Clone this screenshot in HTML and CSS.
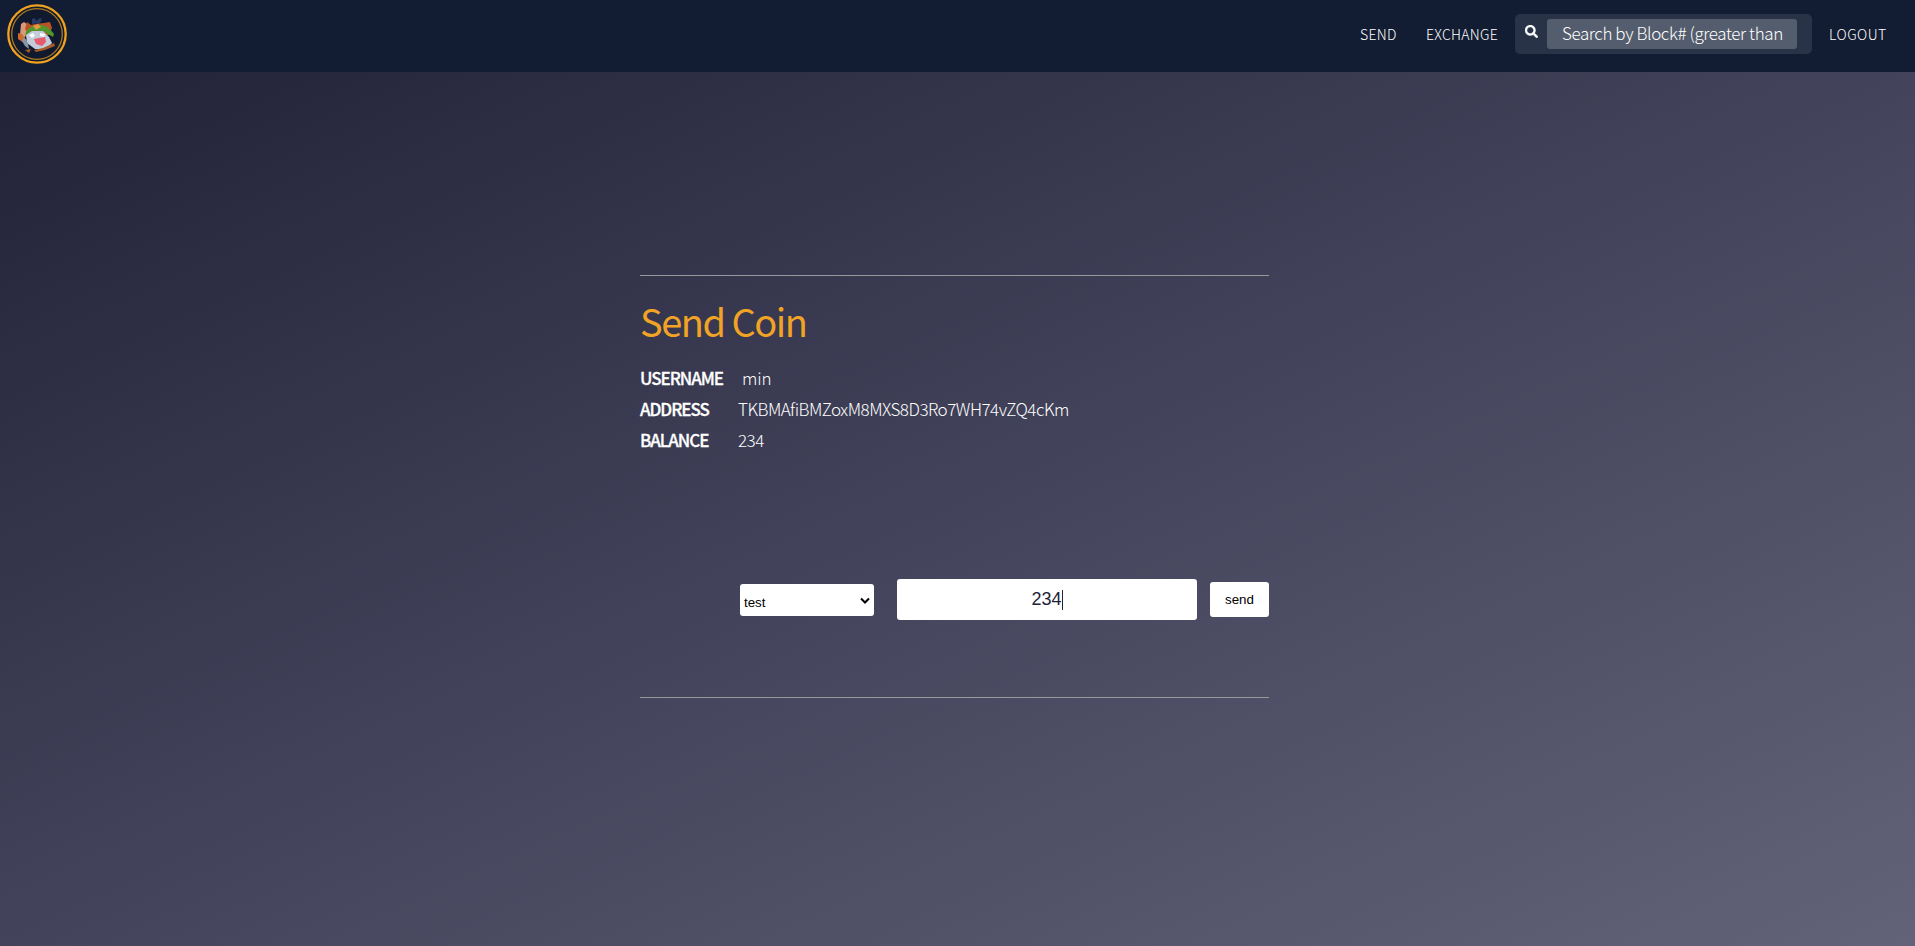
FILE: index.html
```html
<!DOCTYPE html>
<html lang="en">
<head>
<meta charset="utf-8">
<title>Send Coin</title>
<link rel="stylesheet" href="styles.css">
</head>
<body>
<header class="navbar">
  <svg class="logo" viewBox="0 0 60 60" width="60" height="60" aria-label="Logo">
    <circle cx="30" cy="30" r="28.7" fill="#10192d" stroke="#eea21f" stroke-width="2.3"/>
    <circle cx="30" cy="30" r="25.3" fill="none" stroke="#ad7920" stroke-width="1.3"/>
    <path d="M14 20l3-2 3 2 2 4-3 8-4 3-2-4z" fill="#d99a7a"/>
    <path d="M11 29l4 1 5 7-3 2-6-4z" fill="#ce6b28"/>
    <path d="M25 15l3-1 1 3 4-3 2 1-2 4-8 1z" fill="#283b66"/>
    <path d="M20 18l4 3 4-1 9-1 6-1 2 6-3 7-19 1-5-7z" fill="#b95227"/>
    <path d="M19 28q4-7 13-7t15 9l-1 3-10-6-11 2-7 3z" fill="#51952d"/>
    <path d="M26 22l5-2 3 3-5 3z" fill="#e09a3f"/>
    <path d="M19 31l6-4 11 0 6 6 3 6-5 6-12 0-8-6z" fill="#c2ccda"/>
    <path d="M22 31l4-2 2 3-3 2zM33 29l5 1-1 3-4-1z" fill="#fff"/>
    <path d="M27 35l11-2 1 5-4 4-6-2z" fill="#e65a6d"/>
    <path d="M17 33l4 6 1 6-4-3-3-5z" fill="#8598a8"/>
    <path d="M27 46l9-2 11-5 1 3-10 4-9 2zM18 46l6-1-2 4z" fill="#a45b28"/>
  </svg>
  <nav class="menu">
    <a class="nav-link send-link">SEND</a>
    <a class="nav-link exchange-link">EXCHANGE</a>
    <div class="search">
      <svg class="search-icon" viewBox="0 0 512 512" width="13" height="13"><path fill="#fff" stroke="#fff" stroke-width="12" d="M505 442.700 405.300 343c-4.500-4.500-10.600-7-17-7H372c27.600-35.300 44-79.700 44-128C416 93.100 322.900 0 208 0S0 93.100 0 208s93.100 208 208 208c48.300 0 92.700-16.400 128-44v16.300c0 6.400 2.500 12.500 7 17l99.700 99.700c9.400 9.400 24.600 9.400 33.900 0l28.300-28.300c9.400-9.400 9.400-24.600.1-34zM208 336c-70.700 0-128-57.200-128-128 0-70.700 57.200-128 128-128 70.700 0 128 57.200 128 128 0 70.700-57.200 128-128 128z"/></svg>
      <div class="search-field"><span class="search-text">Search by Block# (greater than</span></div>
    </div>
    <a class="nav-link logout-link">LOGOUT</a>
  </nav>
</header>
<main class="page">
  <section class="panel">
    <h1 class="title">Send Coin</h1>
    <div class="row"><span class="label">USERNAME</span><span class="value name">min</span></div>
    <div class="row"><span class="label">ADDRESS</span><span class="value">TKBMAfiBMZoxM8MXS8D3Ro7WH74vZQ4cKm</span></div>
    <div class="row"><span class="label">BALANCE</span><span class="value">234</span></div>
    <div class="form">
      <div class="select"><span>test</span><svg class="chevron" viewBox="0 0 10 8" width="10" height="8"><path d="M1 1.500l4 4 4-4" fill="none" stroke="#000" stroke-width="2"/></svg></div>
      <div class="amount"><span>234</span><i class="caret"></i></div>
      <div class="button">send</div>
    </div>
  </section>
</main>
</body>
</html>
```
FILE: styles.css
```css
* { box-sizing: border-box; }
body {
  margin: 0;
  height: 946px;
  overflow: hidden;
  display: flex;
  flex-direction: column;
  background: #121c32;
  color: #fff;
  font-family: "Noto Sans CJK KR", "Noto Sans", sans-serif;
  font-weight: 300;
}
.navbar {
  height: 72px;
  flex: none;
  display: flex;
  justify-content: space-between;
  background: #121c32;
  padding: 4px 30px 0 7px;
}
.logo { display: block; }
.menu { display: flex; align-items: flex-start; }
.nav-link {
  font-size: 14px;
  line-height: 20px;
  letter-spacing: 0.3px;
  margin-top: 20px;
  white-space: nowrap;
}
.send-link { width: 66px; }
.exchange-link { width: 89px; }
.logout-link { width: 56px; margin-left: 17px; letter-spacing: 0.5px; }
.search {
  display: flex;
  width: 297px;
  height: 40px;
  margin-top: 10px;
  padding: 5px 0 0 10px;
  border-radius: 5px;
  background: #293347;
}
.search-icon { margin-top: 6px; flex: none; }
.search-field {
  width: 250px;
  height: 30px;
  margin-left: 9px;
  padding-left: 15px;
  border-radius: 3px;
  background: #545d6d;
  font-size: 17px;
  line-height: 27px;
  letter-spacing: -0.4px;
  white-space: nowrap;
  overflow: hidden;
}
.page {
  flex: 1;
  padding: 203px 0 0 640px;
  background: linear-gradient(to bottom right, #212238, #43445b 50%, #626379);
}
.panel {
  width: 629px;
  height: 423px;
  border-top: 1px solid #999;
  border-bottom: 1px solid #999;
}
.title {
  margin: 16px 0 12px;
  font-size: 38px;
  line-height: 58px;
  font-weight: 400;
  letter-spacing: -1.5px;
  color: #f1a325;
}
.row { display: flex; height: 31px; align-items: center; font-size: 17px; line-height: 31px; }
.label { width: 98px; font-weight: 500; letter-spacing: -1.05px; -webkit-text-stroke: 0.3px #fff; }
.value { font-size: 17px; letter-spacing: -0.5px; }
.name { padding-left: 4px; letter-spacing: -0.1px; }
.form {
  display: flex;
  align-items: center;
  height: 41px;
  margin: 124px 0 0 100px;
  font-family: "Liberation Sans", Arial, sans-serif;
  font-weight: 400;
}
.select {
  display: flex;
  justify-content: space-between;
  width: 134px;
  height: 32px;
  padding: 10px 4px 0;
  border-radius: 3px;
  background: #fff;
  color: #000;
  font-size: 13.333px;
  line-height: 18px;
}
.chevron { margin-top: 3px; }
.amount {
  display: flex;
  align-items: center;
  justify-content: center;
  width: 300px;
  height: 41px;
  margin-left: 23px;
  border-radius: 3px;
  background: #fff;
  color: #222238;
  font-size: 18px;
}
.caret { width: 1px; height: 20px; background: #222238; }
.button {
  width: 59px;
  height: 35px;
  margin-left: 13px;
  border-radius: 3px;
  background: #fff;
  color: #000;
  font-size: 13.333px;
  line-height: 35px;
  text-align: center;
}
```
